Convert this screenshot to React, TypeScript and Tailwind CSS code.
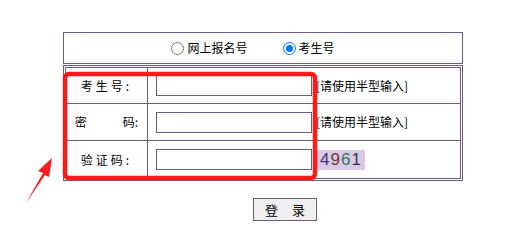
import React from 'react';

const font = { fontFamily: '"Noto Sans CJK SC", "Liberation Sans", sans-serif' };

const Row: React.FC<{ label: React.ReactNode; h: string; last?: boolean; children: React.ReactNode }> = ({ label, h, last, children }) => (
  <div className={`flex ${h} ${last ? '' : 'border-b border-[#6e5a7e]'}`}>
    <div className="w-[82px] border-r border-[#6e5a7e] flex items-center justify-center text-[12px] text-black">
      {label}
    </div>
    <div className="flex-1 flex items-center pl-[8px]">{children}</div>
  </div>
);

export default function App() {
  return (
    <div className="relative w-[522px] h-[241px] bg-white" style={font}>
      <div className="pt-[32px] pl-[63px]">
        {/* radio bar */}
        <div className="w-[400px] h-[32px] border border-[#6e5a7e] flex items-center justify-center pr-[20px] text-[12px] text-black">
          <label className="flex items-center mr-[35px]">
            <span className="w-[13px] h-[13px] rounded-full border border-[#767676] bg-white mr-[3px]" />
            网上报名号
          </label>
          <label className="flex items-center">
            <span className="w-[13px] h-[13px] rounded-full border border-[#0075ff] bg-white mr-[3px] flex items-center justify-center">
              <span className="w-[7px] h-[7px] rounded-full bg-[#0075ff]" />
            </span>
            考生号
          </label>
        </div>

        {/* login table */}
        <div className="w-[400px] mt-[1px] border border-[#6e5a7e] p-[1px]">
          <div className="border border-[#6e5a7e]">
            <Row label={<span className="tracking-[3px]">考生号:</span>} h="h-[36px]">
              <div className="w-[156px] h-[21px] border border-[#6e5a7e] bg-white" />
              <span className="ml-[4px] text-[12px] text-black">[请使用半型输入]</span>
            </Row>
            <Row label={<span>密<span className="inline-block w-[36px]" />码:</span>} h="h-[37px]">
              <div className="w-[156px] h-[21px] border border-[#6e5a7e] bg-white" />
              <span className="ml-[4px] text-[12px] text-black">[请使用半型输入]</span>
            </Row>
            <Row label={<span className="tracking-[3px]">验证码:</span>} h="h-[37px]" last>
              <div className="w-[156px] h-[21px] border border-[#6e5a7e] bg-white" />
              <div
                className="ml-[5px] w-[48px] h-[20px] bg-[#d9c9e6] flex items-center justify-center text-[17px] tracking-[1px]"
                style={{ fontFamily: '"Liberation Sans", sans-serif' }}
              >
                <span className="text-[#3b3472]">4</span>
                <span className="text-[#6b3b35]">9</span>
                <span className="text-[#2c7a5f]">6</span>
                <span className="text-[#2f3b3a]">1</span>
              </div>
            </Row>
          </div>
        </div>

        <div className="w-[400px] flex mt-[17px] pl-[190px]">
          <button className="w-[64px] h-[23px] border border-[#6e5a7e] bg-[#efefef] text-[13px] text-black">
            登<span className="inline-block w-[14px]" />录
          </button>
        </div>
      </div>

      {/* annotation overlay */}
      <svg className="absolute left-0 top-0 pointer-events-none" width="522" height="241">
        <rect x="65" y="74" width="250" height="104" rx="4" fill="none" stroke="#ff1a1a" strokeWidth="4.5" />
        <polygon points="26,203 43,173 38,171 52,158 49,177 45,175" fill="#ff1a1a" />
      </svg>
    </div>
  );
}
